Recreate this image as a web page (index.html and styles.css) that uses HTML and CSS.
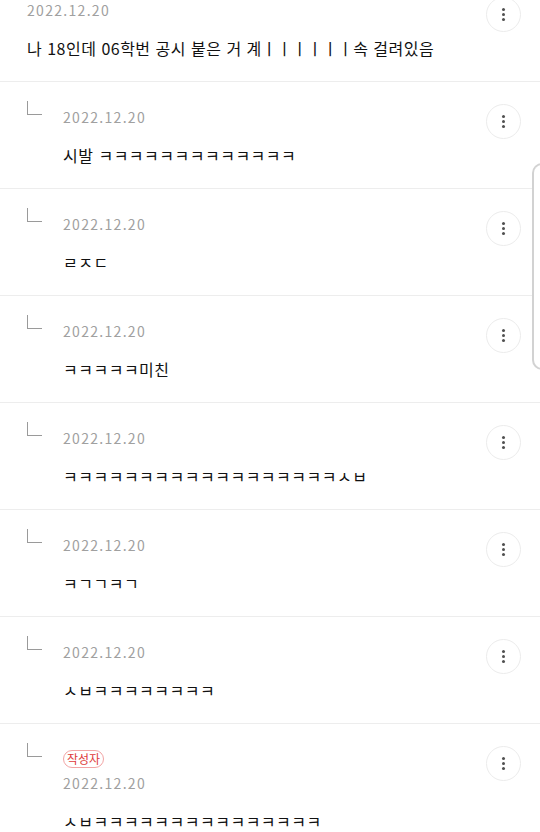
FILE: index.html
```html
<!DOCTYPE html>
<html lang="ko">
  <head>
    <meta charset="UTF-8" />
    <meta name="viewport" content="width=device-width, initial-scale=1.0" />
    <title>댓글</title>
    <link rel="stylesheet" href="styles.css">
  </head>
  <body>
    <ul class="comments">
      <li class="comment">
        <div class="comment-body">
          <div class="comment-date">2022.12.20</div>
          <p class="comment-text">나 18인데 06학번 공시 붙은 거 계ㅣㅣㅣㅣㅣㅣ속 걸려있음</p>
        </div>
        <button class="more-btn" type="button"><span class="dots"></span></button>
      </li>
      <li class="comment">
        <span class="reply-mark"></span>
        <div class="comment-body">
          <div class="comment-date">2022.12.20</div>
          <p class="comment-text">시발 ㅋㅋㅋㅋㅋㅋㅋㅋㅋㅋㅋㅋㅋ</p>
        </div>
        <button class="more-btn" type="button"><span class="dots"></span></button>
      </li>
      <li class="comment">
        <span class="reply-mark"></span>
        <div class="comment-body">
          <div class="comment-date">2022.12.20</div>
          <p class="comment-text">ㄹㅈㄷ</p>
        </div>
        <button class="more-btn" type="button"><span class="dots"></span></button>
      </li>
      <li class="comment">
        <span class="reply-mark"></span>
        <div class="comment-body">
          <div class="comment-date">2022.12.20</div>
          <p class="comment-text">ㅋㅋㅋㅋㅋ미친</p>
        </div>
        <button class="more-btn" type="button"><span class="dots"></span></button>
      </li>
      <li class="comment">
        <span class="reply-mark"></span>
        <div class="comment-body">
          <div class="comment-date">2022.12.20</div>
          <p class="comment-text">ㅋㅋㅋㅋㅋㅋㅋㅋㅋㅋㅋㅋㅋㅋㅋㅋㅋㅋㅅㅂ</p>
        </div>
        <button class="more-btn" type="button"><span class="dots"></span></button>
      </li>
      <li class="comment">
        <span class="reply-mark"></span>
        <div class="comment-body">
          <div class="comment-date">2022.12.20</div>
          <p class="comment-text">ㅋㄱㄱㅋㄱ</p>
        </div>
        <button class="more-btn" type="button"><span class="dots"></span></button>
      </li>
      <li class="comment">
        <span class="reply-mark"></span>
        <div class="comment-body">
          <div class="comment-date">2022.12.20</div>
          <p class="comment-text">ㅅㅂㅋㅋㅋㅋㅋㅋㅋㅋ</p>
        </div>
        <button class="more-btn" type="button"><span class="dots"></span></button>
      </li>
      <li class="comment">
        <span class="reply-mark"></span>
        <div class="comment-body">
          <div class="writer-badge">작성자</div>
          <div class="comment-date with-badge">2022.12.20</div>
          <p class="comment-text">ㅅㅂㅋㅋㅋㅋㅋㅋㅋㅋㅋㅋㅋㅋㅋㅋㅋ</p>
        </div>
        <button class="more-btn" type="button"><span class="dots"></span></button>
      </li>
    </ul>
    <div class="scroll-thumb"></div>
  </body>
</html>
```

FILE: styles.css
```css
body {
  margin: 0;
  background: #fff;
  font-family: "Noto Sans CJK KR", "Noto Sans", sans-serif;
  color: #111;
  overflow: hidden;
}

.comments {
  list-style: none;
  margin: -25px 0 0;
  padding: 0;
}

.comment {
  display: flex;
  align-items: flex-start;
  padding: 25px 19px 21px 27px;
  border-bottom: 1px solid #ededed;
}

/* reply arrow "└" */
.reply-mark {
  flex-shrink: 0;
  width: 14px;
  height: 13px;
  margin: -6px 21px 0 0;
  border-left: 1.5px solid #9a9a9a;
  border-bottom: 1.5px solid #9a9a9a;
}

.comment-body {
  flex: 1;
  min-width: 0;
}

.comment-date {
  font-size: 14px;
  line-height: 20px;
  letter-spacing: 1.3px;
  color: #a0a0a0;
}
.comment-date.with-badge {
  margin-top: 5px;
}

.comment-text {
  margin: 16px 0 0;
  font-size: 16px;
  line-height: 24px;
  color: #111;
  letter-spacing: 0.5px;
}

.writer-badge {
  width: max-content;
  margin-top: 1px;
  padding: 0 3px;
  font-size: 12px;
  line-height: 16px;
  color: #de3b3b;
  border: 1px solid #f2a4a4;
  border-radius: 9px;
}

.more-btn {
  flex-shrink: 0;
  display: flex;
  align-items: center;
  justify-content: center;
  width: 35px;
  height: 35px;
  margin-top: -3px;
  padding: 0;
  border: 1px solid #ececec;
  border-radius: 50%;
  background: #fff;
}
.dots {
  width: 3px;
  height: 3px;
  border-radius: 50%;
  background: #505050;
  box-shadow: 0 -5px 0 #505050, 0 5px 0 #505050;
}

/* fast-scroll handle at the right edge */
.scroll-thumb {
  position: fixed;
  left: 532px;
  top: 163px;
  width: 20px;
  height: 203px;
  background: #fff;
  border: 2px solid #d2d2d2;
  border-right: none;
  border-radius: 10px 0 0 10px;
}
```
